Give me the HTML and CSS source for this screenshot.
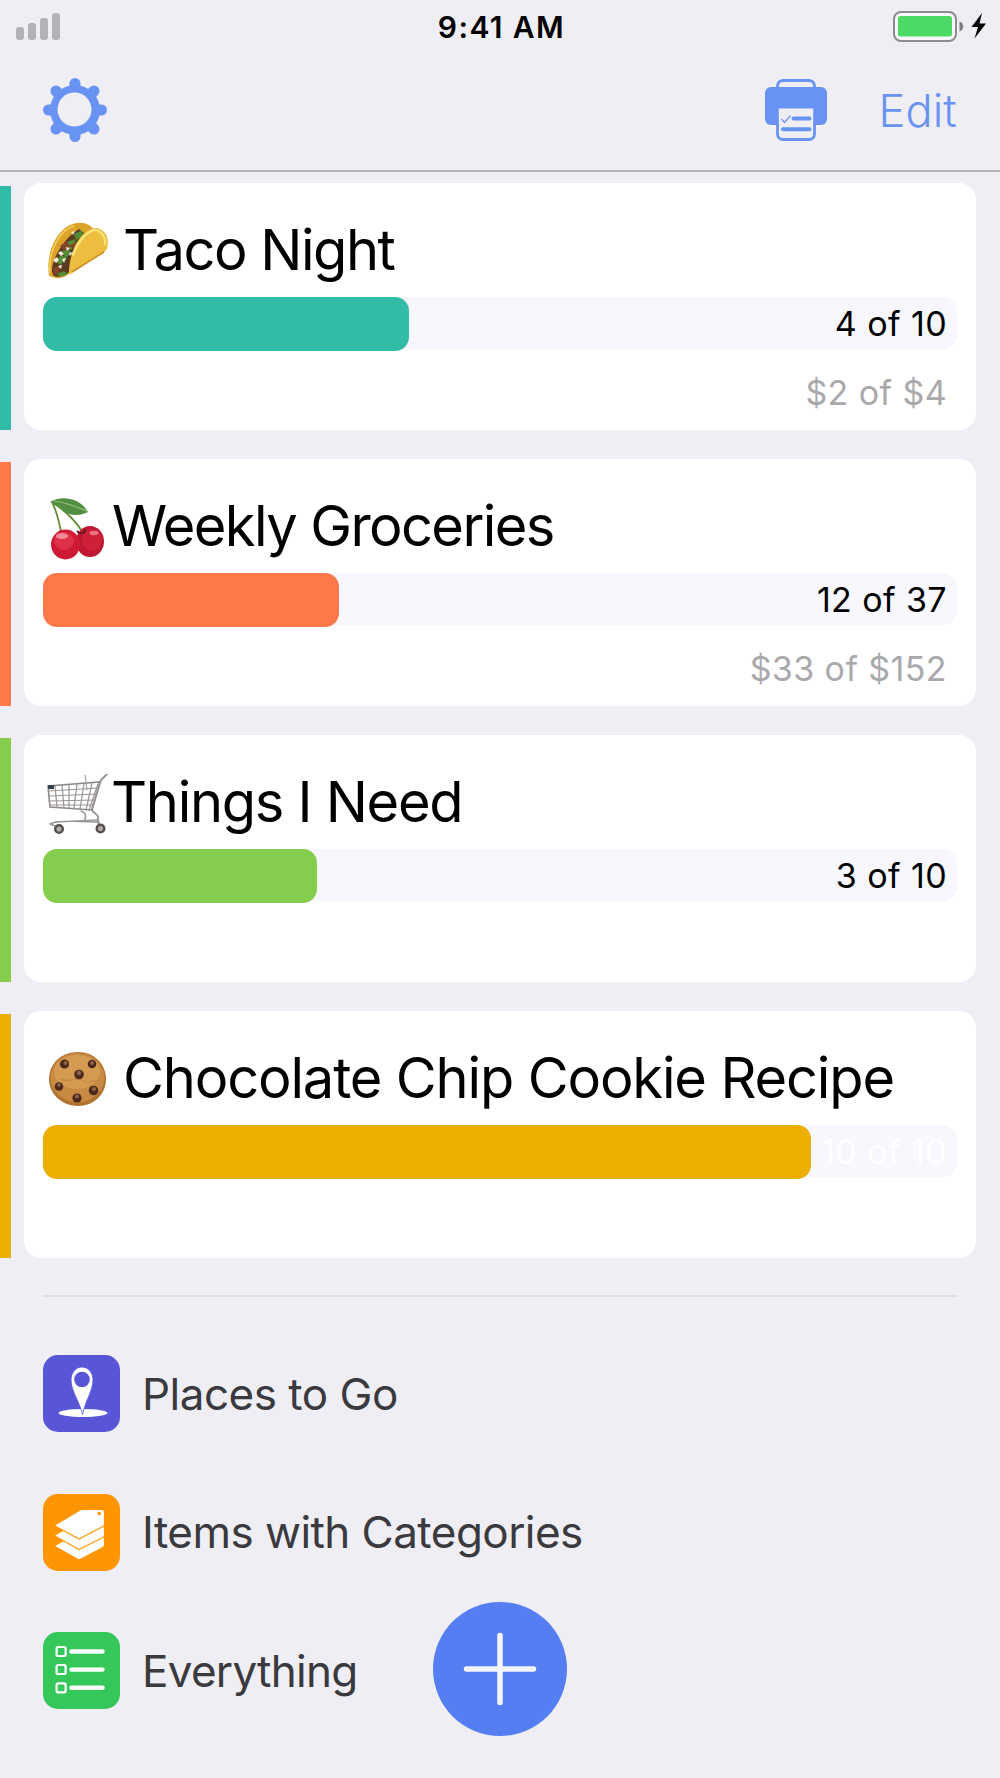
FILE: index.html
```html
<!DOCTYPE html>
<html lang="en">
<head>
  <meta charset="UTF-8" />
  <meta name="viewport" content="width=device-width, initial-scale=1.0" />
  <title>Lists</title>
  <link rel="stylesheet" href="styles.css">
</head>
<body>
  <header class="header">
    <div class="status">
      <svg class="signal" viewBox="0 0 44 27" width="44" height="27" fill="#b3b2b8">
        <rect x="0" y="14" width="8" height="13" rx="3"/>
        <rect x="12" y="10" width="8" height="17" rx="3"/>
        <rect x="24" y="5" width="8" height="22" rx="3"/>
        <rect x="36" y="0" width="8" height="27" rx="3"/>
      </svg>
      <span class="time">9:41 AM</span>
      <svg class="battery" viewBox="0 0 94 31" width="94" height="31">
        <rect x="1" y="1" width="62" height="29" rx="7" fill="#f8f8fa" stroke="#8c8b90" stroke-width="2"/>
        <rect x="5" y="5" width="54" height="20.500" rx="2.500" fill="#4cd964"/>
        <path d="M66.500 10.500c5 1.500 5 8.500 0 10z" fill="#7f7e83"/>
        <path d="M89 2L78.500 16h6.500l-3.500 11.500L93 12.500h-6.500z" fill="#000"/>
      </svg>
    </div>
    <nav class="nav">
      <svg viewBox="0 0 64 64" width="64" height="64">
        <g stroke="#6993f3" stroke-width="11" stroke-linecap="round">
          <path d="M32 5.500v53M5.500 32h53"/>
          <path d="M13 13l38 38M51 13L13 51"/>
        </g>
        <circle cx="32" cy="32" r="25" fill="#6993f3"/>
        <circle cx="31.500" cy="31.500" r="17" fill="#efeef5"/>
      </svg>
      <div class="actions">
        <svg viewBox="0 0 62 62" width="62" height="62">
          <path d="M12.500 10V7a5.500 5.500 0 0 1 5.500-5.500h26A5.500 5.500 0 0 1 49.500 7v3" fill="none" stroke="#6993f3" stroke-width="2.800"/>
          <rect x="0" y="8" width="62" height="38" rx="6" fill="#6993f3"/>
          <path d="M12.500 29.500h37V55a5.500 5.500 0 0 1-5.500 5.500H18a5.500 5.500 0 0 1-5.500-5.500z" fill="#efeef5"/>
          <path d="M12.500 44v11a5.500 5.500 0 0 0 5.500 5.500h26a5.500 5.500 0 0 0 5.500-5.500V44" fill="none" stroke="#6993f3" stroke-width="2.800"/>
          <path d="M12.800 46V29.500M49.200 46V29.500" stroke="#6993f3" stroke-width="2"/>
          <path d="M28.500 39.500h16M18 50.200h26.500" stroke="#6993f3" stroke-width="4" stroke-linecap="round"/>
          <path d="M16.500 40l3 3.500 6-7" fill="none" stroke="#6993f3" stroke-width="1.200"/>
        </svg>
        <span class="edit">Edit</span>
      </div>
    </nav>
  </header>

  <main>
    <section class="list teal">
      <div class="card">
        <h2>
          <svg class="emoji" viewBox="0 0 62 62" width="62" height="62">
            <path d="M2 54C-2 29 12 3 30 1c8-1 14 2 17 7L24 50c-5 5-11 7-15 6z" fill="#dba329"/>
            <path d="M3 51C1 30 12 8 27 4" fill="none" stroke="#f5d160" stroke-width="1.500"/>
            <path d="M5 50c-1-13 13-35 27-43l5 4-13 37c-5 6-12 8-17 6z" fill="#5b3a22"/>
            <path d="M9 39l5-6 6 3-7 7zM15 29l7-2 2 5-6 4zM20 20l8-3 1 7-6 4zM27 12l8-4 1 6-7 4zM10 52l7-3 4 3-8 3z" fill="#528c34"/>
            <path d="M13 24l7-5 3 5-5 5zM6 46l7-2-1 7-5 1zM22 24l7-4-2 7z" fill="#83442a"/>
            <path d="M6 38l4-3 2 3-3 3zM19 25l4 1-3 3zM11 31l3-2 3 3-3 2zM15 37l4-1-2 5zM11 44l4-1-1 4zM22 31l4-1-3 4zM24 10l4-1-2 4z" fill="#efeadc"/>
            <path d="M22 53C21 34 32 7 49 6c10 1 14 12 11 20-1 4-7 7-11 9L25 51c-5 4-10 4-14 3 5 1 9 0 11-1z" fill="#edbd3f"/>
            <path d="M26 33C31 19 40 9 48 8c7 1 11 8 10 14" fill="none" stroke="#fae078" stroke-width="2.500" stroke-linecap="round"/>
            <path d="M25 50l32-20" stroke="#c98d1f" stroke-width="1.500"/>
          </svg>
          <span class="name taco">Taco Night</span>
        </h2>
        <div class="track">
          <div class="fill" style="width: 40%"></div>
          <span class="count">4 of 10</span>
        </div>
        <p class="price">$2 of $4</p>
      </div>
    </section>

    <section class="list orange">
      <div class="card">
        <h2>
          <svg class="emoji" viewBox="0 0 62 62" width="62" height="62">
            <path d="M5 4c4 8 7 19 9 30M6 5c10 6 22 17 28 27" fill="none" stroke="#668c38" stroke-width="1.800"/>
            <path d="M3 4C13-3 33-1 41 14c-9 5-20 3-25-1C12 10 9 5 3 4z" fill="#519044"/>
            <path d="M7 3c11 1 23 6 33 10" fill="none" stroke="#9bbf79" stroke-width="1.200"/>
            <ellipse cx="43" cy="43.500" rx="14" ry="15.500" fill="#bd1731"/>
            <ellipse cx="45" cy="42" rx="10" ry="11" fill="#cf2039"/>
            <ellipse cx="18.500" cy="46.500" rx="14.500" ry="15" fill="#cf1a35"/>
            <ellipse cx="17" cy="43" rx="10" ry="9" fill="#df3049"/>
            <ellipse cx="15" cy="38" rx="6" ry="3" fill="#ef8997"/>
            <path d="M30 33c3 3 7 3 9-1" fill="none" stroke="#6f1720" stroke-width="2"/>
            <ellipse cx="47" cy="35" rx="4.500" ry="2.200" fill="#eb7585"/>
          </svg>
          <span class="name weekly">Weekly Groceries</span>
        </h2>
        <div class="track">
          <div class="fill" style="width: 32.4%"></div>
          <span class="count">12 of 37</span>
        </div>
        <p class="price">$33 of $152</p>
      </div>
    </section>

    <section class="list green">
      <div class="card">
        <h2>
          <svg class="emoji" viewBox="0 0 62 62" width="62" height="62" fill="none" stroke-linecap="round">
            <path d="M1 12l52-4-8 28L3 33z" stroke="#8d888a" stroke-width="1.600"/>
            <path d="M1 17l50-3M2 22l48-2M2 27l46-1M3 31l43 0" stroke="#999496" stroke-width="1.200"/>
            <path d="M8 12l2 21M15 11l2 23M22 11l0 23M30 10l-3 24M37 10l-4 25M45 9l-6 27M51 10l-9 26" stroke="#999496" stroke-width="1.200"/>
            <path d="M38 1l2 15" stroke="#a6a2a3" stroke-width="1.200"/>
            <path d="M60 0l-6 6-9 29c0 5 7 4 6 9v5" stroke="#969193" stroke-width="1.800"/>
            <path d="M34 37c5 2 6 5 3 10M3 50c8-5 38-2 49-2v5M3 50l8 3M8 48l43-2" stroke="#9c9798" stroke-width="1.500"/>
            <path d="M1 11h6v4H1z" fill="#34404a"/>
            <circle cx="12" cy="55" r="3.800" fill="#b2acaa" stroke="#57504e" stroke-width="2.500"/>
            <circle cx="53.500" cy="54.500" r="3.800" fill="#b2acaa" stroke="#57504e" stroke-width="2.500"/>
          </svg>
          <span class="name things">Things I Need</span>
        </h2>
        <div class="track">
          <div class="fill" style="width: 30%"></div>
          <span class="count">3 of 10</span>
        </div>
      </div>
    </section>

    <section class="list gold">
      <div class="card">
        <h2>
          <svg class="emoji" viewBox="0 0 62 62" width="62" height="62">
            <path d="M2 29C2 13 15 2 31 2s28 12 28 27-12 27-28 27S2 44 2 29z" fill="#b27331"/>
            <ellipse cx="30.500" cy="27.500" rx="27" ry="24.500" fill="#c88a43"/>
            <ellipse cx="30" cy="22" rx="23" ry="17" fill="#d59b53"/>
            <path d="M13 29c8 5 16-3 22 1s10 1 16 0" fill="none" stroke="#c58a45" stroke-width="1.500"/>
            <g fill="#4b2a1d">
              <circle cx="17.500" cy="14" r="4.600"/><circle cx="45" cy="14" r="4.300"/>
              <circle cx="32" cy="24.500" r="4.800"/><circle cx="12" cy="36.500" r="4.300"/>
              <circle cx="46.500" cy="40.500" r="4.800"/><circle cx="30" cy="48" r="4.600"/>
            </g>
            <g fill="#91644a">
              <circle cx="18.500" cy="13" r="2"/><circle cx="45" cy="13" r="2"/>
              <circle cx="32" cy="23" r="2.200"/><circle cx="12" cy="35" r="1.800"/>
              <circle cx="47" cy="39" r="2"/><circle cx="30" cy="46.500" r="2"/>
            </g>
          </svg>
          <span class="name cookie">Chocolate Chip Cookie Recipe</span>
        </h2>
        <div class="track">
          <div class="fill" style="width: 84%"></div>
          <span class="count done">10 of 10</span>
        </div>
      </div>
    </section>
  </main>

  <ul class="menu">
    <li>
      <svg viewBox="0 0 77 77" width="77" height="77">
        <rect width="77" height="77" rx="15" fill="#5856d6"/>
        <ellipse cx="40" cy="58" rx="24.500" ry="4" fill="#fff"/>
        <path d="M39.500 59.500C36 45 28 36 28 24.500a11 12.500 0 0 1 22 0C50 36 42.500 45 39.500 59.500z" fill="#fff" stroke="#5856d6" stroke-width="0.800"/>
        <circle cx="39" cy="24.500" r="7.800" fill="#5856d6"/>
      </svg>
      <span class="places">Places to Go</span>
    </li>
    <li>
      <svg viewBox="0 0 77 77" width="77" height="77">
        <rect width="77" height="77" rx="15" fill="#ff9502"/>
        <g fill="#fff" stroke="#ff9502" stroke-width="1.200" stroke-linejoin="round">
          <path d="M11 52L38 37h21q2.500 0 2.500 2.500V51q0 1.500-1.500 2.500L36 66z"/>
          <path d="M11 41.500L38 26h21q2.500 0 2.500 2.500V41q0 1.500-1.500 2.500L36 55.500z"/>
          <path d="M11 31.500L38 15.500h21q2.500 0 2.500 2.500V30q0 1.500-1.500 2.500L36 45z"/>
        </g>
        <circle cx="56.200" cy="19.500" r="1.800" fill="#ff9502"/>
      </svg>
      <span class="items">Items with Categories</span>
    </li>
    <li>
      <svg viewBox="0 0 77 77" width="77" height="77">
        <rect width="77" height="77" rx="15" fill="#35c759"/>
        <g fill="none" stroke="#fff" stroke-width="2.200">
          <rect x="13.600" y="15" width="9" height="9" rx="1.500"/>
          <rect x="13.600" y="33" width="9" height="9" rx="1.500"/>
          <rect x="13.600" y="51.300" width="9" height="9" rx="1.500"/>
        </g>
        <path d="M28.500 19.500h31M28.500 37.600h31M28.500 55.800h31" stroke="#fff" stroke-width="4.400" stroke-linecap="round"/>
      </svg>
      <span class="everything">Everything</span>
    </li>
  </ul>

  <button class="add" aria-label="Add list">
    <svg viewBox="0 0 134 134" width="134" height="134">
      <path d="M67 33.500v67M33.500 67h67" stroke="#f3f5fd" stroke-width="5.500" stroke-linecap="round"/>
    </svg>
  </button>
</body>
</html>
```
FILE: styles.css
```css
* {
  box-sizing: border-box;
}
body {
  margin: 0;
  height: 1778px;
  overflow: hidden;
  position: relative;
  background-color: #efeef5;
  font-family: Inter, "Liberation Sans", sans-serif;
  color: #000;
}
svg {
  display: block;
  flex-shrink: 0;
}
.header {
  height: 172px;
  border-bottom: 2px solid #b3b2b8;
}
.status {
  display: grid;
  grid-template-columns: 1fr auto 1fr;
  height: 54px;
  padding: 0 13px 0 16px;
}
.signal {
  margin-top: 13px;
}
.time {
  font-size: 30px;
  font-weight: 600;
  line-height: 54px;
  letter-spacing: 1.4px;
}
.battery {
  margin-top: 11px;
  justify-self: end;
}
.nav {
  display: flex;
  justify-content: space-between;
  align-items: center;
  height: 112px;
  padding: 0 43px;
}
.actions {
  display: flex;
  align-items: center;
  gap: 51px;
}
.edit {
  padding-top: 2px;
  font-size: 45px;
  font-weight: 350;
  line-height: 64px;
  letter-spacing: 0.2px;
  color: #6993f3;
}
main {
  display: flex;
  flex-direction: column;
  gap: 29px;
  padding-top: 11px;
}
.list {
  display: flex;
  gap: 13px;
  height: 247px;
  padding-right: 24px;
}
.list::before {
  content: "";
  width: 11px;
  margin-top: 3px;
  background-color: var(--color);
}
.teal { --color: #32bba6; }
.orange { --color: #ff7849; }
.green { --color: #85cd4d; }
.gold { --color: #ecae00; }
.card {
  flex: 1;
  padding: 35px 19px 0;
  background-color: white;
  border-radius: 17px;
}
h2 {
  display: flex;
  margin: 0;
  height: 78.500px;
  font-size: 56px;
  font-weight: 400;
  line-height: 65px;
}
.emoji {
  margin: 4px 1px 0 4px;
}
.name {
  white-space: nowrap;
}
.taco {
  margin-left: 13px;
  letter-spacing: -1.5px;
}
.weekly {
  margin-left: 2px;
  letter-spacing: -1.600px;
}
.things {
  margin-left: 1px;
  letter-spacing: -1.300px;
}
.cookie {
  margin-left: 13px;
  letter-spacing: -1.150px;
}
.track {
  display: flex;
  justify-content: space-between;
  width: 914px;
  height: 52px;
  background-color: #f8f7fe;
  border-radius: 14px;
}
.fill {
  flex-shrink: 0;
  height: 54px;
  background-color: var(--color);
  border-radius: 14px;
}
.count {
  padding-right: 10px;
  font-size: 34px;
  line-height: 54px;
  letter-spacing: 0.4px;
  white-space: nowrap;
}
.done {
  color: white;
}
.price {
  margin: 17px 10px 0 0;
  font-size: 34px;
  line-height: 54px;
  letter-spacing: 0.4px;
  text-align: right;
  color: #a9a9ac;
}
.menu {
  display: flex;
  flex-direction: column;
  gap: 61.700px;
  margin: 37px 43px 0;
  padding: 58px 0 0;
  border-top: 2px solid #dfdee4;
  list-style: none;
}
.menu li {
  display: flex;
  align-items: center;
  gap: 22px;
  height: 77px;
  font-size: 44px;
  color: #3a3a3e;
}
.places {
  letter-spacing: -0.500px;
}
.items {
  letter-spacing: -0.550px;
}
.everything {
  letter-spacing: -0.700px;
}
.add {
  position: absolute;
  left: 433px;
  top: 1602px;
  width: 134px;
  height: 134px;
  padding: 0;
  border: 0;
  border-radius: 50%;
  background-color: #557ef2;
}
```
